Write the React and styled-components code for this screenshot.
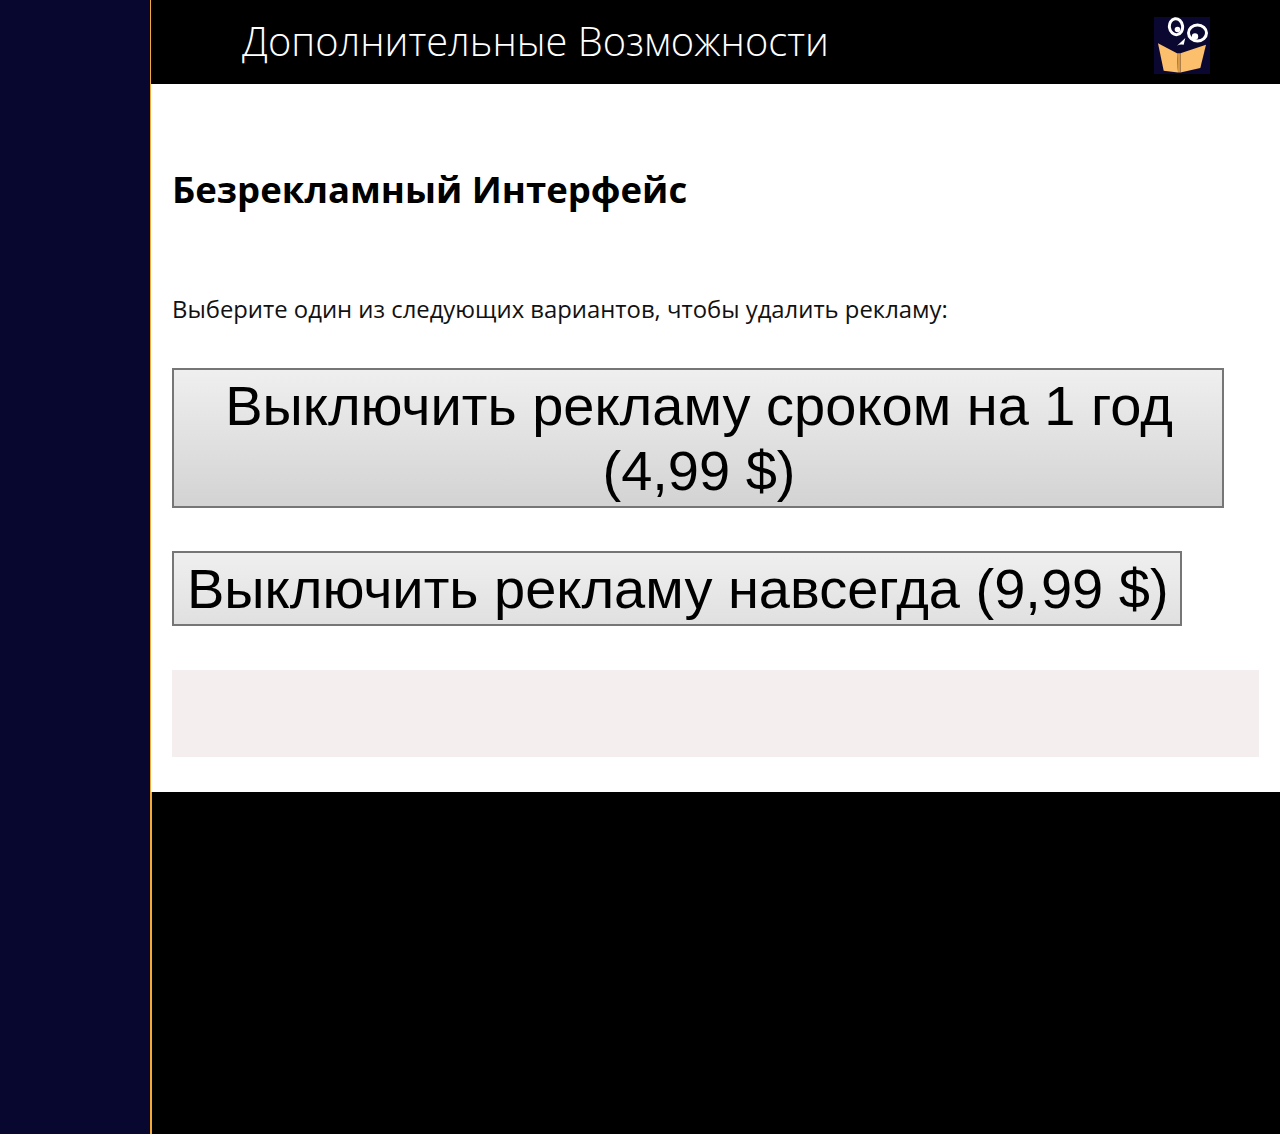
import React from 'react';
import styled, { createGlobalStyle } from 'styled-components';

const GlobalStyle = createGlobalStyle`
  html, body {
    margin: 0;
    padding: 0;
    background: #000000;
  }
`;

function BookOwl() {
  return (
    <svg width="56" height="57" viewBox="0 0 56 57" aria-label="logo">
      <rect width="56" height="57" fill="#0a0730" />
      <ellipse cx="22" cy="9.7" rx="6.6" ry="8" fill="none" stroke="#ffffff" strokeWidth="3" transform="rotate(-8 22 9.7)" />
      <circle cx="23.5" cy="12.5" r="2.8" fill="#ffffff" />
      <ellipse cx="43.5" cy="16" rx="9" ry="8" fill="none" stroke="#ffffff" strokeWidth="3" />
      <circle cx="41" cy="19.5" r="3.2" fill="#ffffff" />
      <path d="M23 28.7 L31.3 21 L29.7 27.7 Q26 26.8 23 28.7 Z" fill="#ffffff" />
      <path d="M4 26.3 L23 36.3 L24 55.5 L9.7 53.7 Z" fill="#fcbf6c" />
      <path d="M52 27.7 L26.5 36.3 L26.5 55.5 L46.3 51 Z" fill="#fcbf6c" />
      <path d="M23 36.3 L26.5 36.3 L26.5 55.5 L24 55.5 Z" fill="#d99a45" />
    </svg>
  );
}

export default function App() {
  return (
    <Page>
      <GlobalStyle />
      <Sidebar />
      <Main>
        <Header>
          <Title>Дополнительные Возможности</Title>
          <BookOwl />
        </Header>
        <Content>
          <Heading>Безрекламный Интерфейс</Heading>
          <Lead>Выберите один из следующих вариантов, чтобы удалить рекламу:</Lead>
          <BuyButton>Выключить рекламу сроком на 1 год (4,99 $)</BuyButton>
          <BuyButton>Выключить рекламу навсегда (9,99 $)</BuyButton>
          <Notice />
        </Content>
        <Footer />
      </Main>
    </Page>
  );
}

const Page = styled.div`
  display: flex;
  width: 1280px;
  height: 1134px;
  overflow: hidden;
`;
const Sidebar = styled.aside`
  flex: 0 0 150px;
  background: #080730;
  border-right: 1px solid #f5a936;
`;
const Main = styled.main`
  flex: 1;
  display: flex;
  flex-direction: column;
  min-width: 0;
`;
const Header = styled.header`
  flex: 0 0 84px;
  box-sizing: border-box;
  display: flex;
  align-items: flex-start;
  justify-content: space-between;
  padding: 17px 70px 0 91px;
  background: #000000;
`;
const Title = styled.h1`
  margin: 0;
  margin-top: -1px;
  font: 300 39.8px/50px 'Open Sans', sans-serif;
  color: #ffffff;
`;
const Content = styled.section`
  display: flex;
  flex-direction: column;
  align-items: flex-start;
  height: 708px;
  box-sizing: border-box;
  padding: 0 21px;
  background: #ffffff;
`;
const Heading = styled.h2`
  margin: 80px 0 0;
  font: 700 36.5px/50px 'Open Sans', sans-serif;
  color: #000000;
`;
const Lead = styled.p`
  margin: 75px 0 0;
  font: 400 23.85px/40px 'Open Sans', sans-serif;
  color: #111111;
`;
const BuyButton = styled.button`
  display: block;
  max-width: 1052px;
  margin: 39px 0 4px;
  padding: 3px 11px 3px 13px;
  box-sizing: border-box;
  border: 2px solid #767676;
  border-radius: 0;
  background: linear-gradient(#efefef, #d3d3d3 136px);
  font: 400 56px/65px 'Liberation Sans', Arial, sans-serif;
  color: #000000;
  text-align: center;
`;
const Notice = styled.div`
  align-self: stretch;
  height: 87px;
  margin-top: 40px;
  background: #f4eeee;
`;
const Footer = styled.footer`
  flex: 1;
  background: #000000;
  border-left: 1px solid #f5a936;
`;
